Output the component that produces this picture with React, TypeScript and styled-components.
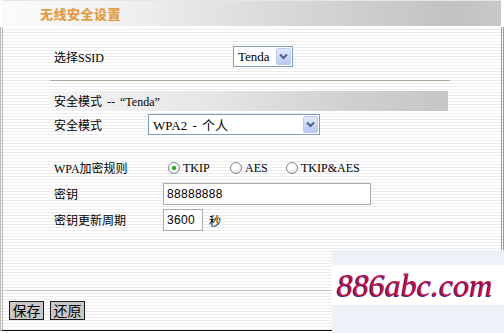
import React from "react";
import styled, { createGlobalStyle } from "styled-components";

const Global = createGlobalStyle`
  html, body { margin: 0; padding: 0; background: #fff; }
  body { width: 504px; height: 333px; overflow: hidden; }
  #root { width: 504px; height: 333px; }
`;

const CJK = `"Liberation Serif", "Noto Sans CJK SC", serif`;

const Frame = styled.div`
  position: relative;
  width: 504px;
  height: 333px;
  display: flex;
  flex-direction: column;
  background: #fff;
`;

const TitleBar = styled.div`
  height: 26px;
  box-sizing: border-box;
  margin: 0 3px 0 2px;
  padding-left: 38px;
  display: flex;
  align-items: center;
  border-top: 1px solid #e6e6e6;
  background: linear-gradient(to right, #fbfbfb 0%, #f0f0f0 25%, #d6d6d6 60%, #c2c2c2 90%, #c8c8c8 100%);
`;

const Title = styled.span`
  font-family: "Noto Sans CJK SC", sans-serif;
  font-weight: 700;
  font-size: 13px;
  letter-spacing: 0.5px;
  color: #e09a45;
  text-shadow: 0 0 1px #f2c88c;
`;

const Content = styled.div`
  flex: 1;
  display: flex;
  flex-direction: column;
  margin: 1px 0 2px 0;
  border-left: 3px double #b8b8b8;
  border-right: 3px double #9a9a9a;
  border-bottom: 1px solid #111;
  box-sizing: border-box;
  background: repeating-linear-gradient(to bottom, #ffffff 0px, #ffffff 2px, #ececec 2px, #ececec 3px);
`;

const Form = styled.div`
  width: 398px;
  margin-left: 47px;
  padding-top: 19px;
  display: flex;
  flex-direction: column;
`;

const Row = styled.div<{ $h: number; $mt: number }>`
  display: flex;
  align-items: center;
  height: ${(p) => p.$h}px;
  margin-top: ${(p) => p.$mt}px;
`;

const Label = styled.span<{ $w: number }>`
  width: ${(p) => p.$w}px;
  flex: none;
  padding-left: 4px;
  box-sizing: border-box;
  font-family: ${CJK};
  font-size: 12px;
  color: #000;
  white-space: nowrap;
`;

const Divider = styled.div`
  height: 0;
  margin-top: 13px;
  border-top: 1px solid #aca899;
  border-bottom: 1px solid #ffffff;
  width: 400px;
`;

const SectionBar = styled.div`
  margin-top: 9px;
  height: 20px;
  display: flex;
  align-items: center;
  padding-left: 4px;
  background: linear-gradient(to right, #f4f4f4 0%, #e6e6e6 40%, #d0d0d0 75%, #c6c6c6 100%);
  font-family: ${CJK};
  font-size: 12px;
  word-spacing: 2px;
  color: #000;
`;

const SelectBox = styled.div<{ $w: number }>`
  width: ${(p) => p.$w}px;
  height: 21px;
  box-sizing: border-box;
  border: 1px solid #7f9db9;
  background: #fff;
  display: flex;
  align-items: center;
  justify-content: space-between;
  padding: 1px 1px 1px 4px;
`;

const SelectText = styled.span`
  font-family: ${CJK};
  font-size: 13px;
  word-spacing: 2px;
  color: #000;
  white-space: nowrap;
`;

const ArrowBtn = styled.span`
  width: 15px;
  height: 17px;
  box-sizing: border-box;
  border: 1px solid #bccaf0;
  border-radius: 2px;
  background: linear-gradient(to bottom, #e2eafd, #b7c8f4);
  display: flex;
  align-items: center;
  justify-content: center;
`;

const Arrow = () => (
  <svg width="9" height="7" viewBox="0 0 9 7">
    <path d="M1 1.5 L4.5 5 L8 1.5" fill="none" stroke="#4d6185" strokeWidth="2" />
  </svg>
);

const Select = ({ w, text }: { w: number; text: string }) => (
  <SelectBox $w={w}>
    <SelectText>{text}</SelectText>
    <ArrowBtn>
      <Arrow />
    </ArrowBtn>
  </SelectBox>
);

const RadioGroup = styled.div`
  display: flex;
  align-items: center;
`;

const RadioItem = styled.label<{ $w: number }>`
  width: ${(p) => p.$w}px;
  display: flex;
  align-items: center;
  gap: 3px;
  font-family: ${CJK};
  font-size: 12px;
  color: #000;
`;

const RadioCircle = styled.span<{ $on?: boolean }>`
  width: 12px;
  height: 12px;
  box-sizing: border-box;
  border-radius: 50%;
  border: 1px solid #7c8a9a;
  background: radial-gradient(circle at 40% 35%, #ffffff 30%, #dcdcd6 100%);
  display: flex;
  align-items: center;
  justify-content: center;
  &::after {
    content: "";
    display: ${(p) => (p.$on ? "block" : "none")};
    width: 4px;
    height: 4px;
    border-radius: 50%;
    background: #2aa02a;
    box-shadow: 0 0 1px #5ccf5c;
  }
`;

const TextInput = styled.div<{ $w: number }>`
  width: ${(p) => p.$w}px;
  height: 22px;
  box-sizing: border-box;
  border: 1px solid #a5acb2;
  background: #fff;
  display: flex;
  align-items: center;
  padding-left: 3px;
  font-family: "Liberation Sans", sans-serif;
  font-size: 12px;
  letter-spacing: 0.3px;
  color: #000;
`;

const Unit = styled.span`
  margin-left: 6px;
  font-family: "Noto Sans CJK SC", sans-serif;
  font-size: 12px;
`;

const Footer = styled.div`
  margin-top: auto;
  height: 40px;
  border-top: 1px solid #c4c4c4;
  display: flex;
  align-items: flex-start;
  gap: 6px;
  padding: 10px 0 0 6px;
  box-sizing: border-box;
`;

const Button = styled.button`
  width: 35px;
  height: 19px;
  padding: 0;
  margin: 0;
  box-sizing: border-box;
  border: 1px solid #1a1a1a;
  background: #c9c9c9;
  font-family: "Noto Sans CJK SC", sans-serif;
  font-size: 14px;
  line-height: 17px;
  color: #000;
`;

const Watermark = styled.div`
  position: absolute;
  left: 332px;
  top: 250px;
  width: 172px;
  height: 83px;
  background: #edf1f8;
  display: flex;
  flex-direction: column;
  padding-top: 15px;
  box-sizing: border-box;
`;

const WaterBand = styled.div`
  height: 40px;
  background: #fff;
  display: flex;
  align-items: center;
  padding-left: 5px;
`;

const WaterText = styled.span`
  font-family: "Liberation Serif", serif;
  font-style: italic;
  font-size: 32px;
  line-height: 1;
  color: #c8103c;
  text-shadow: -1px 1px 0 #3b2a9a;
`;

export default function App() {
  return (
    <>
      <Global />
      <Frame>
        <TitleBar>
          <Title>无线安全设置</Title>
        </TitleBar>
        <Content>
          <Form>
            <Row $h={21} $mt={0}>
              <Label $w={183}>选择SSID</Label>
              <Select w={60} text="Tenda" />
            </Row>
            <Divider />
            <SectionBar>安全模式 -- “Tenda”</SectionBar>
            <Row $h={21} $mt={3}>
              <Label $w={98}>安全模式</Label>
              <Select w={172} text="WPA2 - 个人" />
            </Row>
            <Row $h={18} $mt={24}>
              <Label $w={118}>WPA加密规则</Label>
              <RadioGroup>
                <RadioItem $w={62}>
                  <RadioCircle $on />
                  TKIP
                </RadioItem>
                <RadioItem $w={56}>
                  <RadioCircle />
                  AES
                </RadioItem>
                <RadioItem $w={90}>
                  <RadioCircle />
                  TKIP&amp;AES
                </RadioItem>
              </RadioGroup>
            </Row>
            <Row $h={22} $mt={6}>
              <Label $w={113}>密钥</Label>
              <TextInput $w={208}>88888888</TextInput>
            </Row>
            <Row $h={22} $mt={4}>
              <Label $w={113}>密钥更新周期</Label>
              <TextInput $w={40}>3600</TextInput>
              <Unit>秒</Unit>
            </Row>
          </Form>
          <Footer>
            <Button>保存</Button>
            <Button>还原</Button>
          </Footer>
        </Content>
        <Watermark>
          <WaterBand>
            <WaterText>886abc.com</WaterText>
          </WaterBand>
        </Watermark>
      </Frame>
    </>
  );
}
